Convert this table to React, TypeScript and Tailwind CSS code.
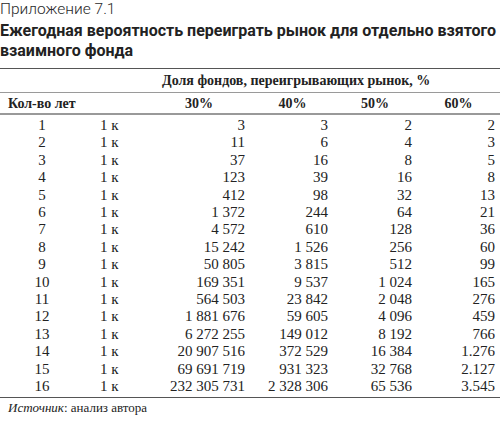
const rows: [string, string, string, string, string][] = [
  ["1", "3", "3", "2", "2"],
  ["2", "11", "6", "4", "3"],
  ["3", "37", "16", "8", "5"],
  ["4", "123", "39", "16", "8"],
  ["5", "412", "98", "32", "13"],
  ["6", "1 372", "244", "64", "21"],
  ["7", "4 572", "610", "128", "36"],
  ["8", "15 242", "1 526", "256", "60"],
  ["9", "50 805", "3 815", "512", "99"],
  ["10", "169 351", "9 537", "1 024", "165"],
  ["11", "564 503", "23 842", "2 048", "276"],
  ["12", "1 881 676", "59 605", "4 096", "459"],
  ["13", "6 272 255", "149 012", "8 192", "766"],
  ["14", "20 907 516", "372 529", "16 384", "1.276"],
  ["15", "69 691 719", "931 323", "32 768", "2.127"],
  ["16", "232 305 731", "2 328 306", "65 536", "3.545"],
];

const cols = "grid grid-cols-[84px_78px_83px_83px_84px_83px]";

export default function App() {
  return (
    <div className="w-[500px] h-[424px] bg-white overflow-hidden text-[#222]">
      <div className="font-['Roboto',sans-serif] font-light text-[15.5px] leading-[18px] text-[#2a2a2a]">
        Приложение 7.1
      </div>
      <h1 className="mt-[3px] font-['Roboto',sans-serif] font-bold text-[16px] leading-[20px] text-[#222]">
        Ежегодная вероятность переиграть рынок для отдельно взятого взаимного фонда
      </h1>

      <div className="mt-[7px] border-t border-[#555] font-['Liberation_Serif',serif]">
        <div className={`${cols} h-[24px] items-center border-b border-[#9a9a9a]`}>
          <div className="col-start-3 col-span-4 pr-[73px] text-center whitespace-nowrap font-bold text-[14px]">
            Доля фондов, переигрывающих рынок, %
          </div>
        </div>
        <div className={`${cols} h-[22px] items-center border-b-2 border-[#999] font-bold text-[14px]`}>
          <div className="col-span-2 pl-[8px]">Кол-во лет</div>
          <div className="text-center pr-[9px]">30%</div>
          <div className="text-center pl-[12px]">40%</div>
          <div className="text-center pl-[10px]">50%</div>
          <div className="text-center pl-[10px]">60%</div>
        </div>

        <div className="pt-[2px] pb-[1px] border-b border-[#555] text-[15px] leading-[17.4px]">
          {rows.map((r) => (
            <div key={r[0]} className={cols}>
              <div className="text-center">{r[0]}</div>
              <div className="pl-[16px]">1 к</div>
              <div className="text-right">{r[1]}</div>
              <div className="text-right">{r[2]}</div>
              <div className="text-right">{r[3]}</div>
              <div className="text-right">{r[4]}</div>
            </div>
          ))}
        </div>
      </div>

      <p className="mt-[2px] pl-[8px] font-['Liberation_Serif',serif] text-[13px] leading-[16px] text-[#222]">
        <i>Источник</i>: анализ автора
      </p>
    </div>
  );
}
